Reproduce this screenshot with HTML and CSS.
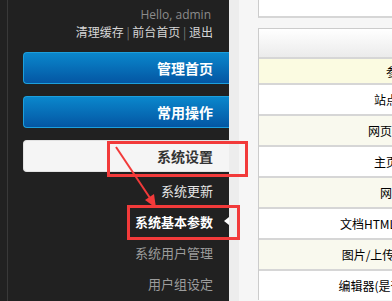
FILE: index.html
```html
<!DOCTYPE html>
<html>
<head>
  <meta charset="utf-8">
  <title>系统基本参数</title>
  <link rel="stylesheet" href="styles.css">
</head>
<body>
  <div class="side">
    <div class="side-in">
      <div class="hello">Hello, admin</div>
      <div class="links">清理缓存 <span class="sep">|</span> 前台首页 <span class="sep">|</span> 退出</div>

      <div class="menu-btn blue">管理首页</div>
      <div class="menu-btn blue">常用操作</div>
      <div class="menu-btn white">系统设置</div>

      <ul class="submenu">
        <li class="bright">系统更新</li>
        <li class="active">系统基本参数</li>
        <li>系统用户管理</li>
        <li>用户组设定</li>
      </ul>
    </div>
  </div>

  <div class="main">
    <div class="topbox"></div>
    <div class="panel">
      <div class="phead"></div>
      <div class="row first"><div class="cell">参数说明</div></div>
      <div class="row"><div class="cell">站点根网址：</div></div>
      <div class="row alt"><div class="cell">网页主页链接：</div></div>
      <div class="row"><div class="cell">主页链接名：</div></div>
      <div class="row alt"><div class="cell">网站名称：</div></div>
      <div class="row"><div class="cell">文档HTML默认保存路径：</div></div>
      <div class="row alt"><div class="cell">图片/上传文件默认路径：</div></div>
      <div class="row"><div class="cell">编辑器(是否启用XHTML)：</div></div>
    </div>
  </div>

  <!-- 标注 -->
  <svg class="marks" width="392" height="301" viewBox="0 0 392 301">
    <rect x="108.5" y="142.5" width="138" height="33" fill="none" stroke="#f23a3a" stroke-width="3"/>
    <rect x="128.5" y="206.5" width="110" height="32" fill="none" stroke="#f23a3a" stroke-width="3"/>
    <line x1="116" y1="147" x2="150" y2="198" stroke="#f23a3a" stroke-width="2"/>
    <polygon points="156,208 145,200 154,194" fill="#f23a3a"/>
  </svg>
</body>
</html>
```

FILE: styles.css
```css
/* Reset básico */
body {
  margin: 0;
  width: 392px;
  height: 301px;
  overflow: hidden;
  display: flex;
  position: relative;
  font-family: "Noto Sans CJK SC", "Open Sans", sans-serif;
}

/* Barra lateral escura */
.side {
  width: 229px;
  flex: none;
  height: 100%;
  box-sizing: border-box;
  padding-left: 7px;
  background-color: #212121;
}

.side-in {
  height: 100%;
  border-left: 1px solid #393939;
  padding: 7px 0 0 15px;
  text-align: right;
}

.hello {
  font-family: "Open Sans", sans-serif;
  font-size: 12px;
  line-height: 16px;
  color: #8c8c8c;
  padding-right: 18px;
}

.links {
  font-size: 12px;
  line-height: 18px;
  color: #d6d6d6;
  padding-right: 16px;
  margin-bottom: 11px;
}

.links .sep {
  color: #7a7a7a;
}

/* Botões do menu */
.menu-btn {
  height: 32px;
  box-sizing: border-box;
  line-height: 30px;
  padding-right: 16px;
  margin-bottom: 12px;
  border-radius: 4px 0 0 4px;
  font-size: 14px;
  font-weight: bold;
}

.menu-btn.blue {
  color: #ffffff;
  border: 1px solid #1c9fdc;
  border-right: none;
  background: linear-gradient(#0a87cc, #0456a3);
}

.menu-btn.white {
  color: #333333;
  border: 1px solid #e2e2e2;
  border-right: none;
  background-color: #f5f5f5;
  margin-bottom: 3px;
}

/* Submenu */
.submenu {
  list-style: none;
  margin: 0;
  padding: 0;
}

.submenu li {
  position: relative;
  height: 31px;
  line-height: 31px;
  padding-right: 16px;
  font-size: 13px;
  color: #9c9c9c;
}

.submenu li.bright {
  color: #e6e6e6;
}

.submenu li.active {
  color: #ffffff;
  font-weight: bold;
}

.submenu li.active::after {
  content: "";
  position: absolute;
  right: 0;
  top: 11px;
  border-top: 4px solid transparent;
  border-bottom: 4px solid transparent;
  border-right: 5px solid #ffffff;
}

/* Área principal */
.main {
  flex: 1;
  min-width: 0;
  height: 100%;
  overflow: hidden;
  background-color: #f6f6f6;
  border-left: 10px solid #ededed;
  padding-left: 19px;
}

.topbox {
  width: 700px;
  height: 16px;
  background-color: #ffffff;
  border-left: 1px solid #cccccc;
  border-bottom: 2px solid #d6d6d6;
  margin-bottom: 10px;
}

.panel {
  width: 700px;
  background-color: #ffffff;
  border-top: 1px solid #cccccc;
  border-left: 1px solid #cccccc;
}

.phead {
  height: 28px;
  background: linear-gradient(#ffffff, #ebebeb);
}

.row {
  height: 29px;
  border-top: 2px solid #d6d6d6;
  background-color: #ffffff;
}

.row.first {
  height: 24px;
  background-color: #fbfbe1;
}

.row.alt {
  background-color: #f9f9ee;
}

.cell {
  width: 302px;
  height: 100%;
  display: flex;
  align-items: center;
  justify-content: center;
  font-size: 12px;
  color: #000000;
  white-space: nowrap;
}

/* Marcações vermelhas */
.marks {
  position: absolute;
  left: 0;
  top: 0;
  pointer-events: none;
}
```
